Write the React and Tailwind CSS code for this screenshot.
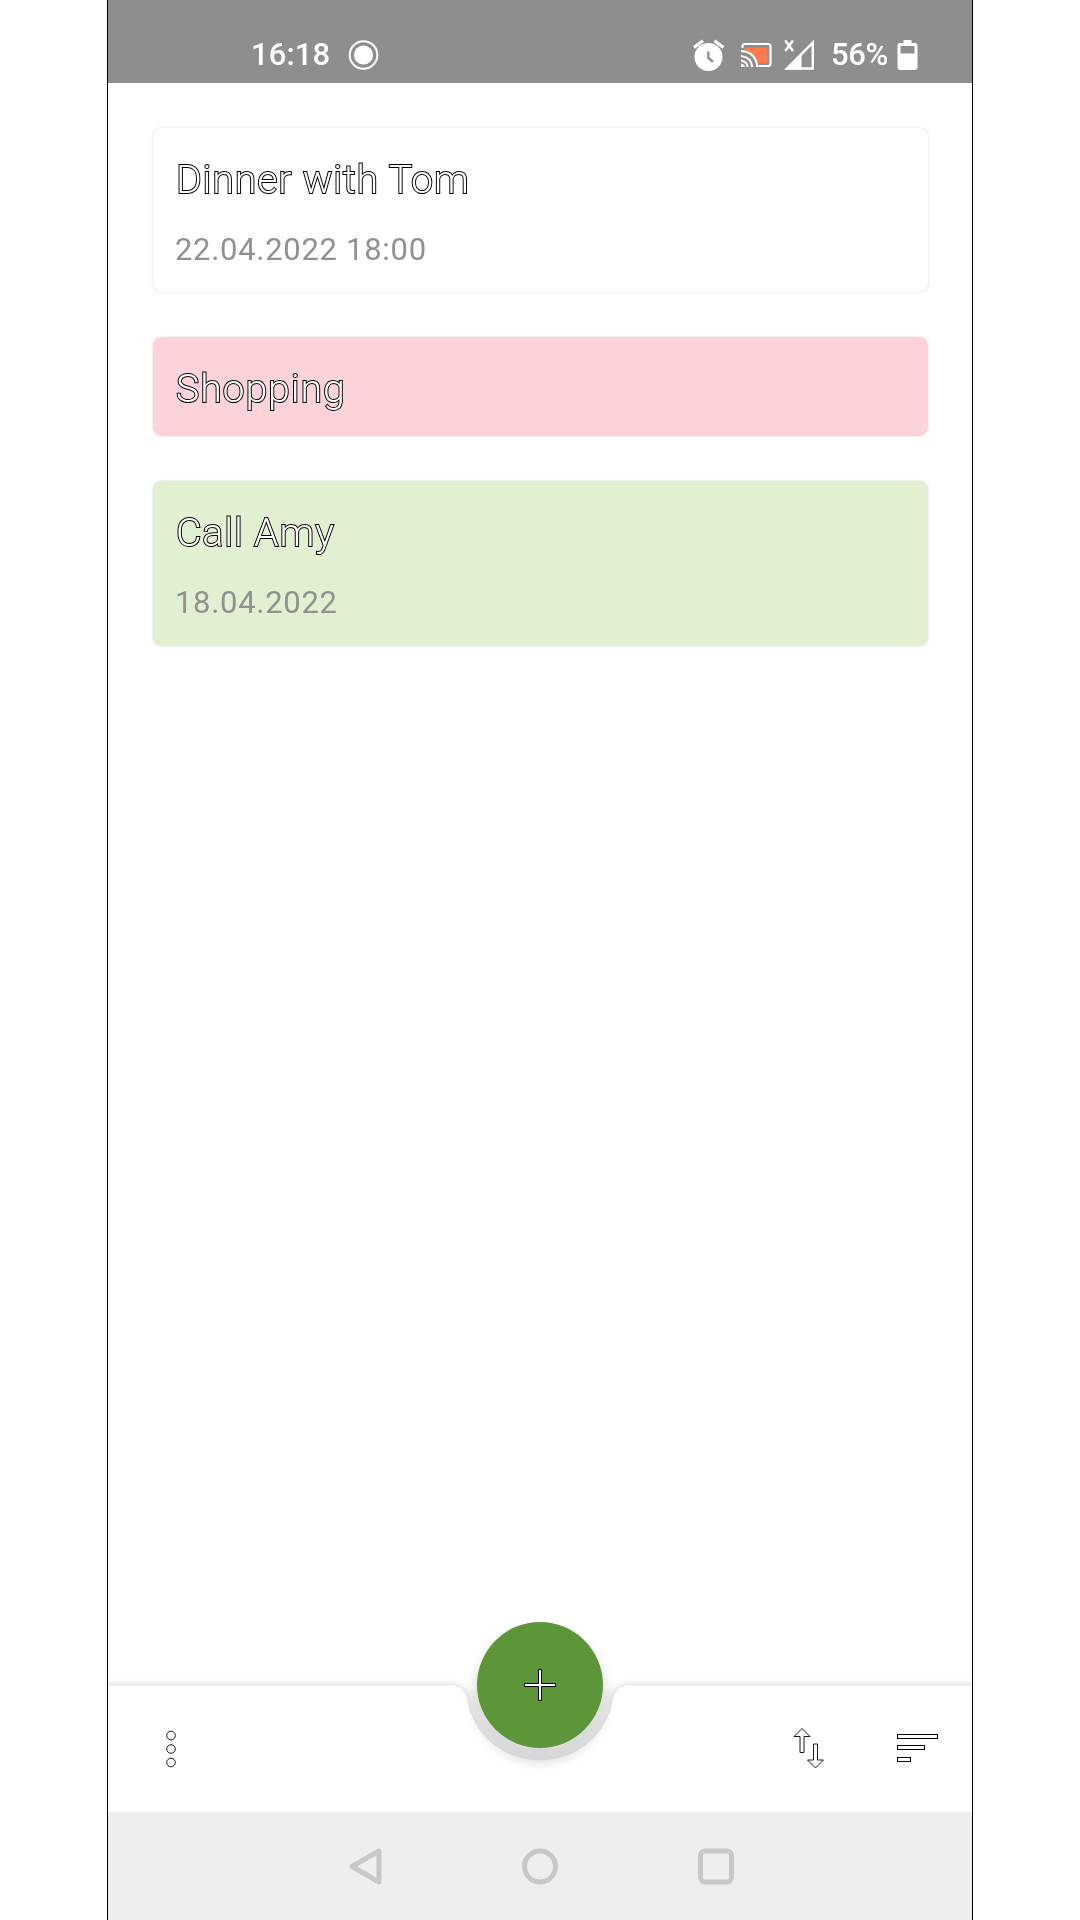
import React from "react";

const tasks = [
  { title: "Dinner with Tom", date: "22.04.2022 18:00", box: "h-[164px] bg-white" },
  { title: "Shopping", box: "h-[99px] bg-[#fed2d9]" },
  { title: "Call Amy", date: "18.04.2022", box: "h-[165px] bg-[#e1f0d1]" },
];

function StatusBar() {
  return (
    <header className="flex h-[83px] shrink-0 items-end justify-between bg-[#8e8e8e] pr-[54px] pb-[12px] pl-[143px] text-white">
      <div className="flex items-center">
        <span className="w-[78px] pt-px text-[31px] leading-[32px] font-medium whitespace-nowrap tracking-[0.1px] will-change-transform">16:18</span>
        <svg className="ml-[18.5px]" width="31" height="32" viewBox="0 0 31 32">
          <circle cx="15.5" cy="16" r="13.8" fill="none" stroke="#fff" strokeWidth="2" />
          <circle cx="15.5" cy="16" r="9.6" fill="#fff" />
        </svg>
      </div>
      <div className="flex items-center">
        <svg width="32" height="32" viewBox="0 0 32 32" fill="none">
          <circle cx="15.5" cy="18" r="14" fill="#fff" />
          <path d="M1 8.5L10 1.8M30.5 8.5L21.5 1.8" stroke="#fff" strokeWidth="3" />
          <path d="M15.3 12.5V19L20 22.8" stroke="#8e8e8e" strokeWidth="2.4" />
        </svg>
        <svg className="ml-[16px]" width="32" height="32" viewBox="0 0 32 32" fill="none">
          <path d="M4 8.5h22.5v15.5H17C16 17 11 13 4 12z" fill="#ff7a4d" />
          <path d="M1.5 9V7.5Q1.5 5 4 5H27Q29.5 5 29.5 7.5V24.5Q29.5 27 27 27H17.5" stroke="#fff" strokeWidth="2.2" />
          <path d="M0 12Q15 13 16.3 28M0 17Q10 18 11.3 28M0 21.5Q6 22.5 6.7 28" stroke="#fff" strokeWidth="2" />
          <path d="M0 24.5Q3.5 25 4 28H0z" fill="#fff" />
        </svg>
        <svg className="ml-[11px]" width="32" height="32" viewBox="0 0 32 32" fill="none">
          <path d="M1.2 1.5L9 12M9 1.5L1.2 12" stroke="#fff" strokeWidth="2.4" />
          <path d="M3 29.5L28.8 3.7V29.5z" stroke="#fff" strokeWidth="2.4" />
          <path d="M1 30.5L17.5 14V30.5z" fill="#fff" />
        </svg>
        <span className="ml-[15px] w-[57px] pt-px text-[31px] leading-[32px] font-medium whitespace-nowrap tracking-[-0.4px] will-change-transform">56%</span>
        <svg className="ml-[9px]" width="21" height="32" viewBox="0 0 21 32">
          <path fillRule="evenodd" fill="#fff" d="M6.5 1h8v3H18q2.5 0 2.5 2.5V28q0 3-3 3H3.5q-3 0-3-3V6.5Q.5 4 3 4h3.5zM3.5 7v7.5h14V7z" />
        </svg>
      </div>
    </header>
  );
}

function TaskCard({ title, date, box }) {
  return (
    <article className={`flex flex-col rounded-[9px] px-[23px] pt-[28px] shadow-[0_0_2px_0.5px_rgba(0,0,0,0.08)] ${box}`}>
      <h2 className="text-[39.3px] leading-[48px] font-light tracking-[0.85px] whitespace-nowrap text-white will-change-transform [-webkit-text-stroke:2px_#000] [paint-order:stroke_fill]">
        {title}
      </h2>
      {date && <p className="-ml-px mt-[28px] text-[31px] leading-[36px] tracking-[0.7px] text-[#919191] will-change-transform">{date}</p>}
    </article>
  );
}

function BottomBar() {
  return (
    <div className="relative flex h-[127px] shrink-0 items-center">
      <svg className="absolute -top-[72px] left-0" width="864" height="199" viewBox="0 0 864 199">
        <defs>
          <filter id="barShadow" x="-5%" y="-20%" width="110%" height="140%">
            <feGaussianBlur stdDeviation="4" />
          </filter>
          <filter id="fabShadow" x="-40%" y="-40%" width="180%" height="180%">
            <feGaussianBlur stdDeviation="7" />
          </filter>
          <linearGradient id="pocket" x1="0" y1="72" x2="0" y2="147" gradientUnits="userSpaceOnUse">
            <stop offset="0" stopColor="#dddddd" stopOpacity="0" />
            <stop offset="0.4" stopColor="#e0e0e0" />
            <stop offset="1" stopColor="#d6d6d6" />
          </linearGradient>
        </defs>
        <path d="M-20 72.500H344Q356 72.500 359.500 87C365 122 396 147 432 147S499 122 504.500 87Q508 72.500 520 72.500H884V230H-20z" fill="#000" opacity="0.2" filter="url(#barShadow)" />
        <path d="M0 72.500H344Q356 72.500 359.500 87C365 122 396 147 432 147S499 122 504.500 87Q508 72.500 520 72.500H864V199H0z" fill="#fff" />
        <circle cx="432" cy="83" r="64" fill="#000" opacity="0.2" filter="url(#fabShadow)" />
        <path d="M356 75Q358 80 359.500 87C365 122 396 147 432 147S499 122 504.500 87Q506 80 508 75z" fill="url(#pocket)" />
      </svg>
      <button aria-label="Add task" className="absolute -top-[63px] left-[369px] flex size-[126px] items-center justify-center rounded-full bg-[#5d9638]">
        <svg width="34" height="34" viewBox="0 0 34 34">
          <path d="M15.5 1.5h3v14h14v3h-14v14h-3v-14h-14v-3h14z" fill="#fff" stroke="#000" />
        </svg>
      </button>
      <div className="relative flex w-full items-center">
        <svg className="ml-[57px]" width="12" height="40" viewBox="0 0 12 40" fill="none" stroke="#000" strokeWidth="0.9">
          <circle cx="6" cy="6.5" r="4.3" />
          <circle cx="6" cy="20" r="4.3" />
          <circle cx="6" cy="33.5" r="4.3" />
        </svg>
        <svg className="mb-[2px] ml-auto" width="32" height="42" viewBox="0 0 32 42" fill="none" stroke="#000" strokeWidth="0.9">
          <path d="M9 1.5L17 9.5H11V25.5H7V9.5H1z" />
          <path d="M20.5 17V33H14.5L22.5 41L30.5 33H24.5V17z" />
        </svg>
        <svg className="mr-[33px] mb-[2px] ml-[72px]" width="42" height="30" viewBox="0 0 42 30" fill="none" stroke="#000">
          <rect x="0.5" y="1.5" width="40" height="4" />
          <rect x="0.5" y="12.5" width="27" height="4" />
          <rect x="0.5" y="24.5" width="13" height="4" />
        </svg>
      </div>
    </div>
  );
}

function NavigationBar() {
  return (
    <nav className="flex h-[108px] shrink-0 items-center justify-center gap-[140px] bg-[#eeeeee]">
      <svg width="36" height="38" viewBox="0 0 36 38" fill="none" stroke="#c8c8c8" strokeWidth="5" strokeLinejoin="round">
        <path d="M33 4V35L6 19.5z" />
      </svg>
      <svg width="36" height="38" viewBox="0 0 36 38" fill="none" stroke="#c8c8c8" strokeWidth="5">
        <circle cx="18" cy="19.5" r="15.5" />
      </svg>
      <svg width="36" height="38" viewBox="0 0 36 38" fill="none" stroke="#c8c8c8" strokeWidth="5">
        <rect x="2.5" y="4" width="31" height="31" rx="4.5" />
      </svg>
    </nav>
  );
}

export default function App() {
  return (
    <div className="flex h-[1920px] w-[1080px] justify-center overflow-hidden bg-white font-['Roboto',sans-serif]">
      <div className="flex w-[866px] flex-col border-x border-black bg-white">
        <StatusBar />
        <main className="flex flex-1 flex-col gap-[45px] pt-[45px] pr-[44px] pl-[45px]">
          {tasks.map((task) => (
            <TaskCard key={task.title} {...task} />
          ))}
        </main>
        <BottomBar />
        <NavigationBar />
      </div>
    </div>
  );
}
